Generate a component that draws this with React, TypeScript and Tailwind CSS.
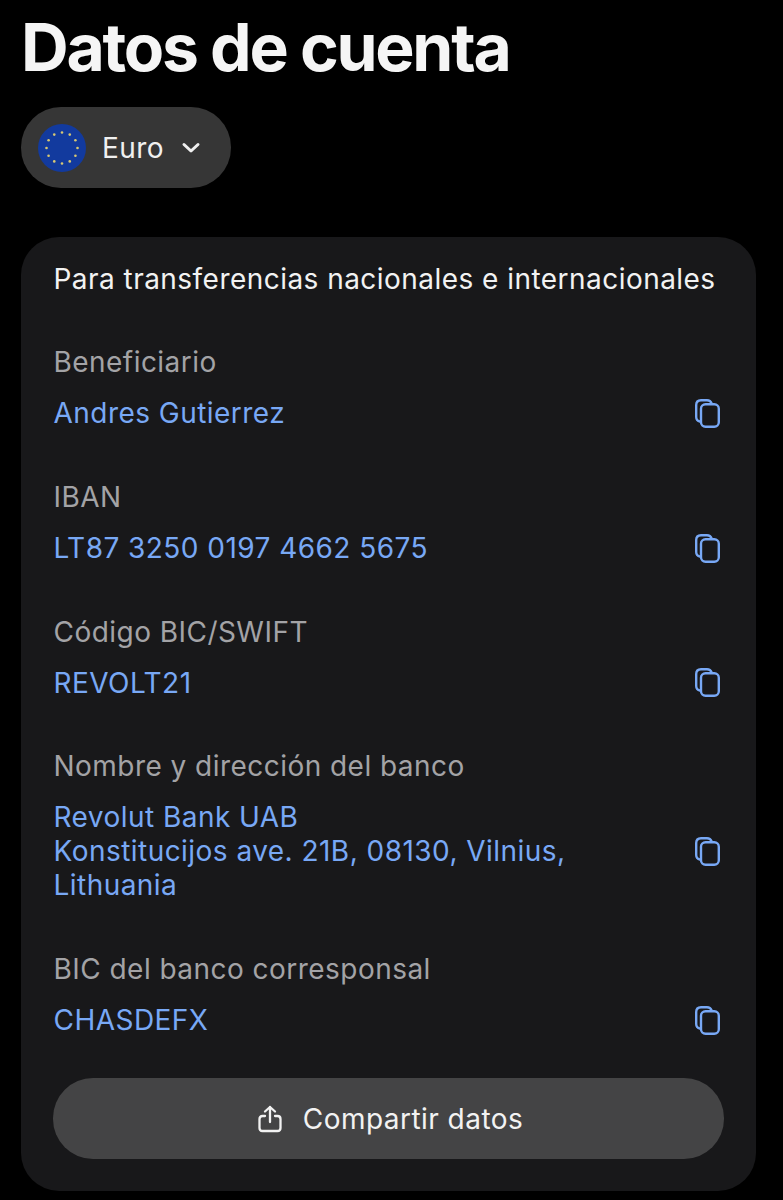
function CopyIcon() {
  return (
    <svg width="25" height="29" viewBox="0 0 25 29" fill="none" stroke="#78a8f5" strokeWidth="2.4" strokeLinejoin="round" strokeLinecap="round" className="shrink-0">
      <path d="M5 22.5C2.6 22 1.2 20.5 1.2 18V6C1.2 3 3 1.2 6 1.2H12C14.2 1.2 15.8 2.2 16.5 4.2" />
      <rect x="6" y="5.2" width="17.8" height="22.6" rx="4.5" />
    </svg>
  );
}
function Row({ label, value, last }: { label: string; value: string[]; last?: boolean }) {
  return (
    <div className={last ? "" : "mb-[49.67px]"}>
      <div className="h-[34px] leading-[34px] text-[#a3a3a6] mb-[17px]">{label}</div>
      <div className="flex items-center justify-between pr-[4px]">
        <div className="text-[#78a8f5] leading-[34px]">
          {value.map((v) => (
            <div key={v}>{v}</div>
          ))}
        </div>
        <CopyIcon />
      </div>
    </div>
  );
}
export default function App() {
  return (
    <div className="w-[783px] h-[1200px] bg-black overflow-hidden px-[21px] font-['Inter',sans-serif] text-[28px] tracking-[0.46px]">
      <h1 className="h-[94px] pt-[7px] text-[66px] leading-[80px] font-bold text-[#f5f5f5] tracking-[-2.25px]">Datos de cuenta</h1>
      <div className="mt-[13px] w-[210px] h-[81px] rounded-[40px] bg-[#363636] flex items-center pl-[17px]">
        <svg width="48" height="48" viewBox="0 0 48 48" className="shrink-0">
          <circle cx="24" cy="24" r="24" fill="#123a9e" />
          {Array.from({ length: 12 }).map((_, i) => (
            <circle key={i} cx={24 + 15.5 * Math.cos((i * Math.PI) / 6)} cy={24 + 15.5 * Math.sin((i * Math.PI) / 6)} r="1.3" fill="#d8c873" />
          ))}
        </svg>
        <span className="ml-[16px] text-[#f0f0f0]">Euro</span>
        <svg width="20" height="12" viewBox="0 0 20 12" fill="none" stroke="#f0f0f0" strokeWidth="3" strokeLinecap="round" strokeLinejoin="round" className="ml-[17px]">
          <path d="M3 2.5 10 9l7-6.5" />
        </svg>
      </div>
      <div className="mt-[49px] w-[735px] h-[954px] rounded-[38px] bg-[#18181a] px-[32px] pt-[25px]">
        <div className="pl-[0.5px]">
          <div className="h-[34px] leading-[34px] text-[#f2f2f2] mb-[49.4px]">Para transferencias nacionales e internacionales</div>
          <Row label="Beneficiario" value={["Andres Gutierrez"]} />
          <Row label="IBAN" value={["LT87 3250 0197 4662 5675"]} />
          <Row label="Código BIC/SWIFT" value={["REVOLT21"]} />
          <Row label="Nombre y dirección del banco" value={["Revolut Bank UAB", "Konstitucijos ave. 21B, 08130, Vilnius,", "Lithuania"]} />
          <Row label="BIC del banco corresponsal" value={["CHASDEFX"]} last />
        </div>
        <div className="mt-[41px] w-[671px] h-[81px] rounded-[40px] bg-[#444445] flex items-center justify-center pl-[3px] text-[#f2f2f2]">
          <svg width="26" height="30" viewBox="0 0 26 30" fill="none" stroke="#f2f2f2" strokeWidth="2.3" strokeLinecap="round" strokeLinejoin="round" className="mr-[20px]">
            <path d="M13 18V3M8 7.5 13 3l5 4.5" />
            <path d="M8 12H5.5C3.5 12 2.5 13 2.5 15v9c0 2 1 3 3 3h15c2 0 3-1 3-3v-9c0-2-1-3-3-3H18" />
          </svg>
          <span>Compartir datos</span>
        </div>
      </div>
    </div>
  );
}
